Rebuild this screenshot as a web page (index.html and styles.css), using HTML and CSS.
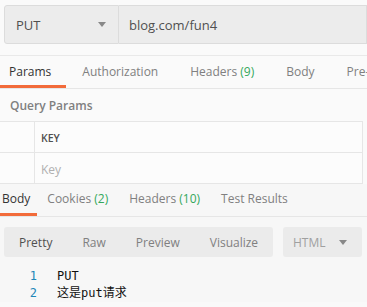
FILE: index.html
```html
<!DOCTYPE html>
<html lang="zh">
<head>
  <meta charset="UTF-8" />
  <title>PUT blog.com/fun4</title>
  <link rel="stylesheet" href="styles.css">
</head>
<body>

  <!-- request -->
  <div class="request">
    <div class="request-bar">
      <div class="method">
        <span>PUT</span>
        <span class="caret"></span>
      </div>
      <div class="url">blog.com/fun4</div>
    </div>

    <div class="tabs">
      <div class="tab active">Params</div>
      <div class="tab">Authorization</div>
      <div class="tab">Headers <span class="count">(9)</span></div>
      <div class="tab">Body</div>
      <div class="tab">Pre-</div>
    </div>

    <div class="section-title">Query Params</div>
    <div class="params">
      <div class="row">
        <div class="cell-check"></div>
        <div class="cell head">KEY</div>
      </div>
      <div class="row">
        <div class="cell-check"></div>
        <div class="cell placeholder">Key</div>
      </div>
    </div>
  </div>

  <!-- response -->
  <div class="response">
    <div class="tabs res-tabs">
      <div class="tab active">Body</div>
      <div class="tab">Cookies <span class="count">(2)</span></div>
      <div class="tab">Headers <span class="count">(10)</span></div>
      <div class="tab">Test Results</div>
    </div>

    <div class="toolbar">
      <div class="views">
        <span class="view active">Pretty</span>
        <span class="view">Raw</span>
        <span class="view">Preview</span>
        <span class="view">Visualize</span>
      </div>
      <div class="format">
        <span>HTML</span>
        <span class="caret"></span>
      </div>
    </div>

    <div class="code">
      <div class="line"><span class="num">1</span><span class="txt">PUT</span></div>
      <div class="line"><span class="num">2</span><span class="txt">这是put请求</span></div>
    </div>
  </div>

</body>
</html>
```

FILE: styles.css
```css
body {
  margin: 0;
  font-family: "Open Sans", "Noto Sans", sans-serif;
  font-size: 12px;
  color: #808080;
  background-color: #f9f9f9;
  overflow: hidden;
}
.request {
  background-color: #fafafa;
}
.request-bar {
  display: flex;
  height: 39px;
  padding: 5px 0 11px 4px;
  border-bottom: 1px solid #e9e9e9;
}
.method {
  width: 115px;
  display: flex;
  align-items: center;
  justify-content: space-between;
  padding: 0 12px 0 11px;
  box-sizing: border-box;
  background-color: #ececec;
  border: 1px solid #dcdcdc;
  border-radius: 3px 0 0 3px;
  color: #505050;
  font-size: 13px;
}
.url {
  flex: 1;
  display: flex;
  align-items: center;
  padding-left: 10px;
  background-color: #ececec;
  border: 1px solid #dcdcdc;
  border-left: none;
  color: #505050;
  font-size: 13px;
}
.caret {
  width: 0;
  height: 0;
  border-left: 4px solid transparent;
  border-right: 4px solid transparent;
  border-top: 5px solid #888;
}
.tabs {
  display: flex;
  height: 32px;
  border-bottom: 1px solid #e6e6e6;
  white-space: nowrap;
}
.tab {
  padding: 2px 16px 0;
  line-height: 27px;
  border-bottom: 3px solid transparent;
}
.tab:first-child {
  padding: 2px 15px 0 9px;
}
.tab.active {
  color: #333;
  border-bottom-color: #f26b3a;
}
.count {
  color: #34a85c;
}
.section-title {
  padding: 8px 10px 0;
  height: 24px;
  font-weight: 600;
  color: #808080;
}
.params {
  background-color: #fcfcfc;
  border-top: 1px solid #e6e6e6;
  margin-right: 4px;
}
.row {
  display: flex;
  height: 30px;
  border-bottom: 1px solid #e6e6e6;
}
.cell-check {
  width: 34px;
  border-right: 1px solid #e6e6e6;
}
.cell {
  flex: 1;
  display: flex;
  align-items: center;
  padding: 2px 0 0 6px;
  border-right: 1px solid #e6e6e6;
}
.head {
  font-size: 10.5px;
  font-weight: 600;
  color: #505050;
}
.placeholder {
  color: #b0b0b0;
}
.response {
  background-color: #f7f7f7;
}
.res-tabs {
  height: 32px;
}
.res-tabs .tab {
  padding: 1px 11px 0 10px;
  line-height: 28px;
}
.res-tabs .tab:first-child {
  padding: 1px 7px 0 2px;
}
.toolbar {
  display: flex;
  gap: 10px;
  padding: 10px 5px 0 4px;
}
.views {
  width: 269px;
  height: 30px;
  display: flex;
  align-items: center;
  gap: 30px;
  padding-left: 15px;
  box-sizing: border-box;
  background-color: #ebebeb;
  border-radius: 3px;
}
.view.active {
  color: #505050;
}
.format {
  width: 79px;
  height: 30px;
  display: flex;
  align-items: center;
  justify-content: space-between;
  padding: 0 15px 0 10px;
  box-sizing: border-box;
  background-color: #ebebeb;
  border-radius: 3px;
  color: #a0a0a0;
}
.code {
  padding-top: 11px;
  font-family: "DejaVu Sans Mono", "Noto Sans CJK SC", monospace;
  font-size: 12px;
}
.line {
  display: flex;
  height: 17px;
  line-height: 17px;
}
.num {
  width: 37px;
  text-align: right;
  color: #1f86b8;
}
.txt {
  padding-left: 20px;
  color: #111;
}
```
